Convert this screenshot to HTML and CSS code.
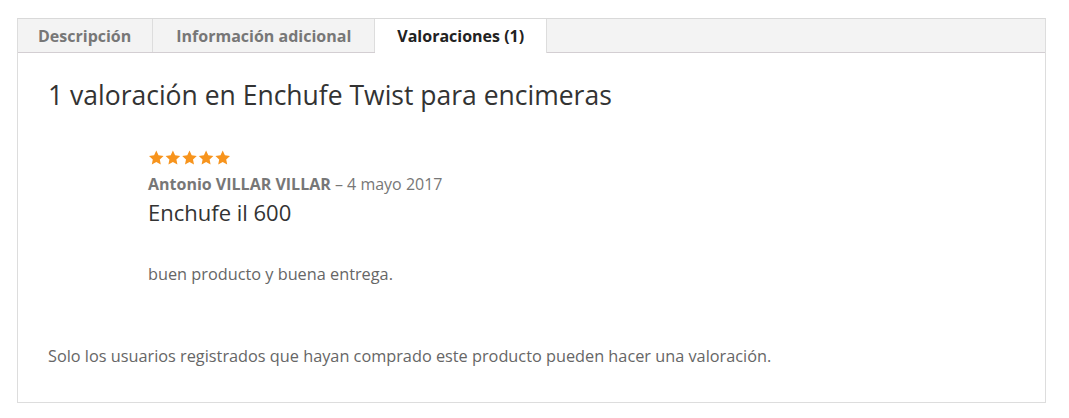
FILE: index.html
```html
<!DOCTYPE html>
<html lang="es">
  <head>
    <meta charset="UTF-8" />
    <meta name="viewport" content="width=device-width, initial-scale=1.0" />
    <title>Enchufe Twist para encimeras - Valoraciones</title>
    <link rel="stylesheet" href="styles.css">
  </head>
  <body>
    <!-- Product tabs -->
    <div class="tabs">
      <ul class="tab-list">
        <li class="tab first">Descripción</li>
        <li class="tab">Información adicional</li>
        <li class="tab active">Valoraciones (1)</li>
      </ul>

      <!-- Reviews panel -->
      <div class="panel">
        <h2 class="reviews-title">1 valoración en Enchufe Twist para encimeras</h2>

        <div class="review">
          <div class="stars" title="Valorado con 5 de 5">
            <svg width="84" height="15" viewBox="0 0 84 15">
              <defs>
                <path id="star" d="M8.3 0.6l2.2 4.7 5.1 0.6-3.8 3.5 1 5.1-4.5-2.6-4.5 2.6 1-5.1-3.8-3.5 5.1-0.6z" />
              </defs>
              <use href="#star" x="0" fill="#f7941d" />
              <use href="#star" x="16.6" fill="#f7941d" />
              <use href="#star" x="33.2" fill="#f7941d" />
              <use href="#star" x="49.8" fill="#f7941d" />
              <use href="#star" x="66.4" fill="#f7941d" />
            </svg>
          </div>
          <p class="meta"><strong>Antonio VILLAR VILLAR</strong> – 4 mayo 2017</p>
          <h3 class="review-title">Enchufe il 600</h3>
          <p class="review-text">buen producto y buena entrega.</p>
        </div>

        <p class="note">Solo los usuarios registrados que hayan comprado este producto pueden hacer una valoración.</p>
      </div>
    </div>
  </body>
</html>
```

FILE: styles.css
```css
body {
  margin: 18px 0 0 17px;
  font-family: "Open Sans", "Liberation Sans", sans-serif;
  background-color: #ffffff;
  color: #666666;
}
.tabs {
  width: 1027px; /* box runs from x=17 to x=1045 */
  border: 1px solid #dddddd;
  border-top-color: #d9d9d9;
}
.tab-list {
  display: flex;
  margin: 0;
  padding: 0;
  list-style: none;
  background-color: #f3f3f3;
  border-bottom: 1px solid #d3ced2;
}
.tab {
  padding: 0 23px;
  height: 33px;
  line-height: 34px;
  font-size: 16px;
  font-weight: 700;
  color: #777777;
  border-right: 1px solid #dddddd;
}
.tab.first {
  padding: 0 21px 0 20px;
}
.tab.active {
  padding: 0 22px;
  background-color: #ffffff;
  color: #222222;
  margin-bottom: -1px;
  height: 34px;
}
.panel {
  padding: 24px 30px 34px 30px;
}
.reviews-title {
  margin: 0;
  font-size: 26.5px;
  font-weight: 400;
  line-height: 36px;
  color: #333333;
}
.review {
  margin: 37px 0 0 100px;
}
.stars {
  height: 16px;
}
.stars svg {
  display: block;
}
.meta {
  margin: 6px 0 0;
  font-size: 16px;
  line-height: 24px;
  color: #777777;
}
.meta strong {
  font-weight: 700;
}
.review-title {
  margin: 1px 0 0;
  font-size: 22px;
  font-weight: 400;
  line-height: 30px;
  color: #333333;
}
.review-text {
  margin: 35px 0 0;
  font-size: 16.3px;
  line-height: 24px;
  color: #666666;
}
.note {
  margin: 58px 0 0;
  font-size: 16.3px;
  line-height: 24px;
  color: #666666;
}
```
